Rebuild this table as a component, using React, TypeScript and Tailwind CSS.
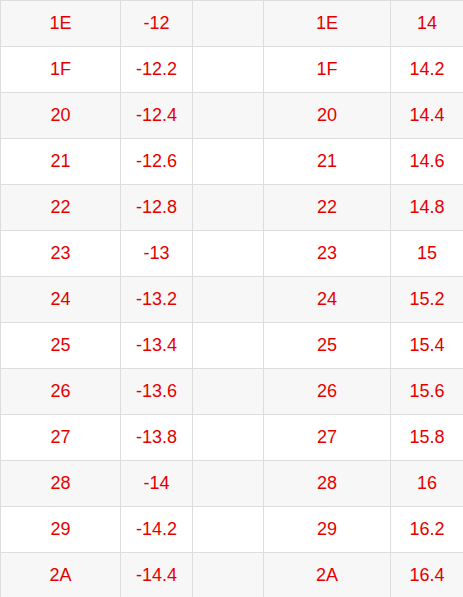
import React from 'react';

const rows: [string, string, string][] = [
  ['1E', '-12', '14'],
  ['1F', '-12.2', '14.2'],
  ['20', '-12.4', '14.4'],
  ['21', '-12.6', '14.6'],
  ['22', '-12.8', '14.8'],
  ['23', '-13', '15'],
  ['24', '-13.2', '15.2'],
  ['25', '-13.4', '15.4'],
  ['26', '-13.6', '15.6'],
  ['27', '-13.8', '15.8'],
  ['28', '-14', '16'],
  ['29', '-14.2', '16.2'],
  ['2A', '-14.4', '16.4'],
];

const cell = 'h-[46px] flex items-center justify-center border-r border-b border-[#dddddd]';

export default function App() {
  return (
    <div className="w-[463px] h-[597px] overflow-hidden bg-white">
      <div
        className="grid grid-cols-[120px_72px_71px_127px_80px] w-[471px] border-l border-t border-[#dddddd] text-[18px] text-[#e50000]"
        style={{ fontFamily: '"Liberation Sans", Arial, sans-serif' }}
      >
        {rows.map(([code, neg, pos], i) => {
          const bg = i % 2 === 0 ? 'bg-[#f7f7f7]' : 'bg-white';
          return (
            <React.Fragment key={code}>
              <div className={`${cell} ${bg}`}>{code}</div>
              <div className={`${cell} ${bg}`}>{neg}</div>
              <div className={`${cell} ${bg}`}></div>
              <div className={`${cell} ${bg}`}>{code}</div>
              <div className={`${cell} ${bg} pr-[7px]`}>{pos}</div>
            </React.Fragment>
          );
        })}
      </div>
    </div>
  );
}
